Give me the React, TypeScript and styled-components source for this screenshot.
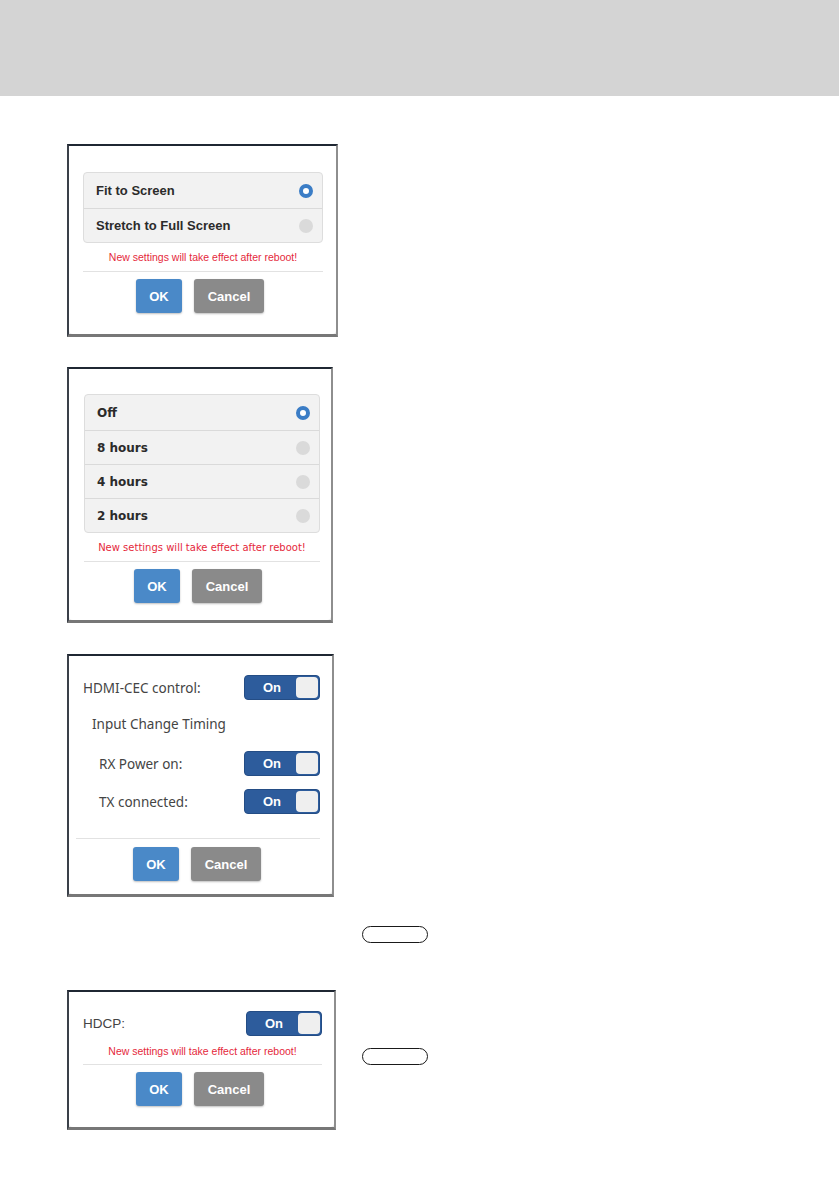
import React from 'react';
import styled, { createGlobalStyle } from 'styled-components';

const GlobalStyle = createGlobalStyle`
  html, body {
    margin: 0;
    padding: 0;
    background: #ffffff;
    overflow: hidden;
  }
  body {
    font-family: 'Liberation Sans', Arial, sans-serif;
  }
`;

const Page = styled.div`
  width: 839px;
  height: 1191px;
  overflow: hidden;
  background: #ffffff;
`;

const HeaderBand = styled.div`
  height: 96px;
  background: #d4d4d4;
`;

const Content = styled.div`
  padding: 48px 0 0 67px;
  display: flex;
  flex-direction: column;
`;

const Row = styled.div<{ gap?: number }>`
  display: flex;
  align-items: flex-start;
  margin-top: ${({ gap }) => gap ?? 0}px;
`;

const Frame = styled.div<{ w: number; h: number }>`
  width: ${({ w }) => w}px;
  height: ${({ h }) => h}px;
  box-sizing: border-box;
  background: #e9e9e9;
  border-style: solid;
  border-width: 2px 2px 3px 2px;
  border-color: #1f2732 #8e8e8e #777777 #3a4049;
  display: flex;
`;

const Modal = styled.div<{ pad: string }>`
  flex: 1;
  background: #ffffff;
  border-radius: 0 0 4px 4px;
  padding: ${({ pad }) => pad};
  display: flex;
  flex-direction: column;
`;

const OptionList = styled.div`
  border: 1px solid #dddddd;
  border-radius: 4px;
  background: #f2f2f2;
  overflow: hidden;
`;

const OptionRow = styled.div<{ h: number; font: string; size: number }>`
  height: ${({ h }) => h}px;
  box-sizing: border-box;
  display: flex;
  align-items: center;
  justify-content: space-between;
  padding: 0 9px 0 12px;
  font-family: ${({ font }) => font};
  font-weight: 700;
  font-size: ${({ size }) => size}px;
  color: #2b2b2b;
  & + & {
    border-top: 1px solid #dadada;
  }
`;

const Radio = styled.span<{ checked?: boolean }>`
  width: 14px;
  height: 14px;
  box-sizing: border-box;
  border-radius: 50%;
  background: ${({ checked }) => (checked ? '#ffffff' : '#dadada')};
  border: ${({ checked }) => (checked ? '4px solid #3b7dc6' : 'none')};
`;

const Notice = styled.div<{ font: string; mt: number; size: number }>`
  margin-top: ${({ mt }) => mt}px;
  text-align: center;
  font-family: ${({ font }) => font};
  font-size: ${({ size }) => size}px;
  line-height: 14px;
  color: #e5283b;
`;

const Divider = styled.div<{ mt: number }>`
  margin-top: ${({ mt }) => mt}px;
  height: 1px;
  background: #e2e2e2;
`;

const ButtonBar = styled.div<{ mt: number; shift: number }>`
  margin-top: ${({ mt }) => mt}px;
  padding-left: ${({ shift }) => shift}px;
  display: flex;
  gap: 12px;
`;

const Button = styled.div<{ variant: 'ok' | 'cancel' }>`
  height: 34px;
  width: ${({ variant }) => (variant === 'ok' ? 46 : 70)}px;
  box-sizing: border-box;
  border-radius: 3px;
  display: flex;
  align-items: center;
  justify-content: center;
  background: ${({ variant }) => (variant === 'ok' ? '#4a89c8' : '#8a8a8a')};
  box-shadow: 0 1px 2px rgba(0, 0, 0, 0.25);
  color: #ffffff;
  font-family: 'Liberation Sans', Arial, sans-serif;
  font-weight: 700;
  font-size: 13px;
`;

const SettingRow = styled.div<{ mt: number; indent: number }>`
  margin-top: ${({ mt }) => mt}px;
  padding-left: ${({ indent }) => indent}px;
  height: 25px;
  display: flex;
  align-items: center;
  justify-content: space-between;
`;

const SettingLabel = styled.span<{ font: string; size: number }>`
  font-family: ${({ font }) => font};
  font-size: ${({ size }) => size}px;
  color: #444444;
`;

const Toggle = styled.div`
  width: 76px;
  height: 25px;
  box-sizing: border-box;
  border-radius: 4px;
  background: #2d5c9c;
  border: 1px solid #244d85;
  padding: 1px;
  display: flex;
  align-items: center;
`;

const ToggleText = styled.span`
  flex: 1;
  padding-left: 2px;
  text-align: center;
  color: #ffffff;
  font-family: 'Liberation Sans', Arial, sans-serif;
  font-weight: 700;
  font-size: 13px;
`;

const ToggleKnob = styled.span`
  width: 22px;
  height: 21px;
  border-radius: 4px;
  background: #efefef;
`;

const Pill = styled.div<{ mt: number; ml: number }>`
  margin-top: ${({ mt }) => mt}px;
  margin-left: ${({ ml }) => ml}px;
  width: 66px;
  height: 17px;
  box-sizing: border-box;
  border: 1.2px solid #1a1a1a;
  border-radius: 9px;
`;

const ARIAL = "'Liberation Sans', Arial, sans-serif";
const TAHOMA = "'DejaVu Sans', Verdana, sans-serif";
const SEGOE = "'Noto Sans', 'Open Sans', sans-serif";

const NOTICE = 'New settings will take effect after reboot!';

const OnToggle = () => (
  <Toggle>
    <ToggleText>On</ToggleText>
    <ToggleKnob />
  </Toggle>
);

const Buttons = ({ mt, shift }: { mt: number; shift: number }) => (
  <ButtonBar mt={mt} shift={shift}>
    <Button variant="ok">OK</Button>
    <Button variant="cancel">Cancel</Button>
  </ButtonBar>
);

const timerOptions = ['Off', '8 hours', '4 hours', '2 hours'];

export default function App() {
  return (
    <Page>
      <GlobalStyle />
      <HeaderBand />
      <Content>
        <Row>
          <Frame w={271} h={193}>
            <Modal pad="26px 13px 0 14px">
              <OptionList>
                <OptionRow h={35} font={ARIAL} size={13}>
                  Fit to Screen
                  <Radio checked />
                </OptionRow>
                <OptionRow h={34} font={ARIAL} size={13}>
                  Stretch to Full Screen
                  <Radio />
                </OptionRow>
              </OptionList>
              <Notice font={ARIAL} size={10.5} mt={7}>
                {NOTICE}
              </Notice>
              <Divider mt={7} />
              <Buttons mt={7} shift={53} />
            </Modal>
          </Frame>
        </Row>

        <Row gap={30}>
          <Frame w={266} h={256}>
            <Modal pad="25px 11px 0 15px">
              <OptionList>
                {timerOptions.map((label, i) => (
                  <OptionRow key={label} h={i === 0 ? 35 : 34} font={TAHOMA} size={12}>
                    {label}
                    <Radio checked={i === 0} />
                  </OptionRow>
                ))}
              </OptionList>
              <Notice font={TAHOMA} size={10} mt={8}>
                {NOTICE}
              </Notice>
              <Divider mt={6} />
              <Buttons mt={7} shift={50} />
            </Modal>
          </Frame>
        </Row>

        <Row gap={31}>
          <Frame w={267} h={243}>
            <Modal pad="19px 12px 0 7px">
              <SettingRow mt={0} indent={7}>
                <SettingLabel font={SEGOE} size={13.5}>HDMI-CEC control:</SettingLabel>
                <OnToggle />
              </SettingRow>
              <SettingRow mt={11} indent={16}>
                <SettingLabel font={SEGOE} size={13.5}>Input Change Timing</SettingLabel>
              </SettingRow>
              <SettingRow mt={15} indent={23}>
                <SettingLabel font={SEGOE} size={13.5}>RX Power on:</SettingLabel>
                <OnToggle />
              </SettingRow>
              <SettingRow mt={13} indent={23}>
                <SettingLabel font={SEGOE} size={13.5}>TX connected:</SettingLabel>
                <OnToggle />
              </SettingRow>
              <Divider mt={24} />
              <Buttons mt={8} shift={57} />
            </Modal>
          </Frame>
        </Row>

        <Row>
          <Pill mt={29} ml={295} />
        </Row>

        <Row gap={47}>
          <Frame w={269} h={140}>
            <Modal pad="19px 12px 0 14px">
              <SettingRow mt={0} indent={0}>
                <SettingLabel font={ARIAL} size={13.5}>HDCP:</SettingLabel>
                <OnToggle />
              </SettingRow>
              <Notice font={ARIAL} size={10.5} mt={8}>
                {NOTICE}
              </Notice>
              <Divider mt={6} />
              <Buttons mt={7} shift={53} />
            </Modal>
          </Frame>
          <Pill mt={58} ml={26} />
        </Row>
      </Content>
    </Page>
  );
}
